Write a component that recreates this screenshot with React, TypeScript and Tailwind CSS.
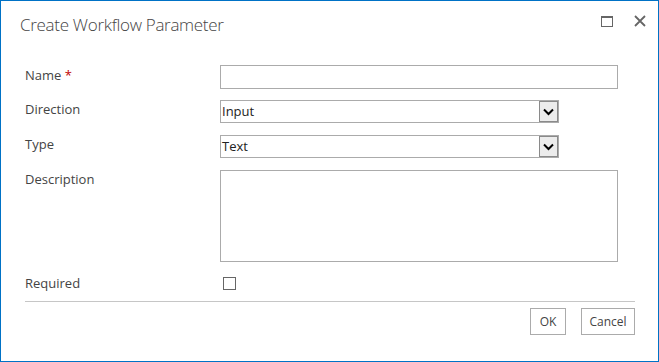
import React from "react";

const font = { fontFamily: '"Open Sans", "Noto Sans", sans-serif' };

function Chevron() {
  return (
    <svg width="11" height="8" viewBox="0 0 11 8">
      <path d="M1 1.5 L5.5 6 L10 1.5" fill="none" stroke="#000" strokeWidth="2" />
    </svg>
  );
}

function Select({ value }: { value: string }) {
  return (
    <div className="flex h-[23px] w-[339px] items-stretch border border-[#ababab] bg-white">
      <div className="flex-1 pl-[1px] text-[13px] leading-[21px] text-[#222]">{value}</div>
      <div className="flex w-[19px] items-center justify-center border border-[#8a8a8a] bg-[#ececec]">
        <Chevron />
      </div>
    </div>
  );
}

export default function App() {
  return (
    <div
      className="relative h-[362px] w-[659px] border border-[#0072c6] bg-white text-[#444]"
      style={font}
    >
      <div className="absolute right-[45px] top-[15px]">
        <svg width="12" height="11" viewBox="0 0 12 11">
          <rect x="0.5" y="0.5" width="11" height="10" fill="none" stroke="#666" strokeWidth="1" />
          <rect x="0" y="0" width="12" height="2" fill="#666" />
        </svg>
      </div>
      <div className="absolute right-[12px] top-[14px]">
        <svg width="12" height="12" viewBox="0 0 12 12">
          <path d="M1 1 L11 11 M11 1 L1 11" stroke="#666" strokeWidth="1.8" />
        </svg>
      </div>

      <div className="pl-[19px] pt-[11px] text-[17px] font-light leading-[26px] tracking-[-0.3px] text-[#444]">
        Create Workflow Parameter
      </div>

      <div className="pl-[24px] pt-[27px] pr-[40px]">
        <div className="flex">
          <div className="w-[195px] pt-[1px] text-[13px] leading-[18px]">
            Name <span className="text-[#bf0000]">*</span>
          </div>
          <div className="h-[24px] w-[398px] border border-[#ababab]" />
        </div>

        <div className="mt-[11px] flex">
          <div className="w-[195px] text-[13px] leading-[18px]">Direction</div>
          <Select value="Input" />
        </div>

        <div className="mt-[12px] flex">
          <div className="w-[195px] text-[13px] leading-[18px]">Type</div>
          <Select value="Text" />
        </div>

        <div className="mt-[12px] flex">
          <div className="w-[195px] text-[13px] leading-[18px]">Description</div>
          <div className="h-[92px] w-[398px] border border-[#ababab]" />
        </div>

        <div className="mt-[12px] flex items-center">
          <div className="w-[198px] text-[13px] leading-[18px]">Required</div>
          <div className="h-[13px] w-[13px] border border-[#666]" />
        </div>

        <div className="mt-[9px] h-px w-[610px] bg-[#c6c6c6]" />

        <div className="mt-[6px] flex w-[610px] justify-end gap-[15px]">
          <div className="flex h-[27px] w-[36px] items-center justify-center border border-[#ababab] text-[12px] text-[#444]">
            OK
          </div>
          <div className="flex h-[27px] w-[54px] items-center justify-center border border-[#ababab] text-[12px] text-[#444]">
            Cancel
          </div>
        </div>
      </div>
    </div>
  );
}
